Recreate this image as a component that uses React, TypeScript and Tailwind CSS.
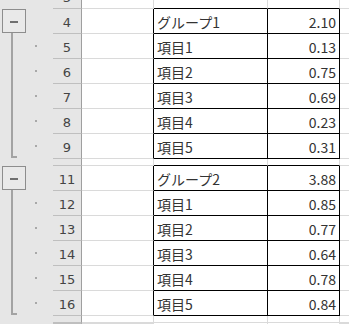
import React from 'react';

interface SheetRow {
  num: string;
  h: string;
  label?: string;
  value?: string;
  inTable?: boolean;
  bBlack?: boolean;
  partial?: boolean;
}

const groups = [
  { name: 'グループ1', total: '2.10', items: ['0.13', '0.75', '0.69', '0.23', '0.31'], start: 4 },
  { name: 'グループ2', total: '3.88', items: ['0.85', '0.77', '0.64', '0.78', '0.84'], start: 11 },
];

const buildRows = (): SheetRow[] => {
  const rows: SheetRow[] = [{ num: '3', h: 'h-[9px]', bBlack: true, partial: true }];
  groups.forEach((g, gi) => {
    rows.push({ num: String(g.start), h: 'h-[25px]', label: g.name, value: g.total, inTable: true, bBlack: true });
    g.items.forEach((v, i) => {
      rows.push({ num: String(g.start + i + 1), h: 'h-[25px]', label: `項目${i + 1}`, value: v, inTable: true, bBlack: true });
    });
    // collapsed-looking spacer row between / after groups
    rows.push({ num: '', h: 'h-[7px]', bBlack: gi === 0 });
  });
  rows.push({ num: '', h: 'h-[1px]' });
  return rows;
};

const Outline: React.FC = () => {
  const dots1 = [45, 70, 95, 120, 145];
  const dots2 = [202, 227, 252, 277, 302];
  return (
    <svg width="53" height="324" className="shrink-0 block">
      <rect x="0" y="0" width="53" height="324" fill="#e6e6e6" />
      {/* group 1 */}
      <rect x="2.5" y="9.5" width="23" height="23" fill="#e9e9e9" stroke="#8d8d8d" />
      <rect x="10" y="21" width="8" height="2" fill="#6f6f6f" />
      <rect x="11" y="33" width="2" height="125" fill="#a3a3a3" />
      <rect x="11" y="156" width="6" height="2" fill="#a3a3a3" />
      {dots1.map((y) => (
        <rect key={y} x="35" y={y} width="2" height="2" fill="#a8a8a8" />
      ))}
      {/* group 2 */}
      <rect x="2.5" y="166.5" width="23" height="23" fill="#e9e9e9" stroke="#8d8d8d" />
      <rect x="10" y="178" width="8" height="2" fill="#6f6f6f" />
      <rect x="11" y="190" width="2" height="125" fill="#a3a3a3" />
      <rect x="11" y="313" width="6" height="2" fill="#a3a3a3" />
      {dots2.map((y) => (
        <rect key={y} x="35" y={y} width="2" height="2" fill="#a8a8a8" />
      ))}
    </svg>
  );
};

const App: React.FC = () => {
  const rows = buildRows();

  return (
    <div className="w-[349px] h-[324px] overflow-hidden flex bg-white">
      <Outline />
      <div className="flex-1 flex flex-col">
        {rows.map((r, idx) => (
          <div key={idx} className={`flex shrink-0 ${r.h}`}>
            {/* row header */}
            <div className="w-[29px] shrink-0 bg-[#e6e6e6] border-r border-b border-r-[#9f9f9f] border-b-[#bfbfbf] overflow-hidden flex items-end justify-center font-['DejaVu_Sans',sans-serif] text-[13px] text-[#444]">
              {r.partial ? (
                <div className="h-[24px] shrink-0 flex items-center pt-[4px]">{r.num}</div>
              ) : (
                <div className="h-full flex items-center pt-[4px]">{r.num}</div>
              )}
            </div>
            {/* column A */}
            <div
              className={`w-[72px] shrink-0 border-r border-b border-b-[#dadada] ${
                r.inTable ? 'border-r-black' : 'border-r-[#dadada]'
              }`}
            />
            {/* column B */}
            <div
              className={`w-[114px] shrink-0 border-r border-b flex items-center pl-[3px] pt-[3px] overflow-hidden font-['Noto_Sans_CJK_JP',sans-serif] text-[14px] text-[#333] ${
                r.inTable ? 'border-r-black' : 'border-r-[#dadada]'
              } ${r.bBlack ? 'border-b-black' : 'border-b-[#dadada]'}`}
            >
              {r.label}
            </div>
            {/* column C */}
            <div
              className={`w-[72px] shrink-0 border-r border-b flex items-center justify-end pr-[3px] pt-[3px] overflow-hidden font-['Noto_Sans_CJK_JP',sans-serif] text-[14px] text-[#333] ${
                r.inTable ? 'border-r-black' : 'border-r-[#dadada]'
              } ${r.bBlack ? 'border-b-black' : 'border-b-[#dadada]'}`}
            >
              {r.value}
            </div>
            {/* column D */}
            <div className="flex-1 border-b border-b-[#dadada]" />
          </div>
        ))}
      </div>
    </div>
  );
};

export default App;
